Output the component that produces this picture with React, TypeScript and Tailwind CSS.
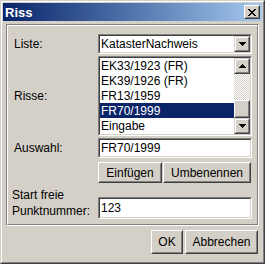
import React from "react";

function Sunken({ className = "", innerClass = "", children }: { className?: string; innerClass?: string; children?: React.ReactNode }) {
  return (
    <div className={"border border-t-[#808080] border-l-[#808080] border-b-white border-r-white " + className}>
      <div className={"w-full h-full border border-t-[#404040] border-l-[#404040] border-b-[#d4d0c8] border-r-[#d4d0c8] bg-white " + innerClass}>
        {children}
      </div>
    </div>
  );
}

function Raised({ className = "", children }: { className?: string; children?: React.ReactNode }) {
  return (
    <div className={"border border-t-white border-l-white border-b-[#404040] border-r-[#404040] bg-[#d4d0c8] " + className}>
      <div className="w-full h-full border border-t-[#d4d0c8] border-l-[#d4d0c8] border-b-[#808080] border-r-[#808080] flex items-center justify-center">
        {children}
      </div>
    </div>
  );
}

function ArrowBtn({ up = false, className = "" }: { up?: boolean; className?: string }) {
  return (
    <div className={"border border-t-[#d4d0c8] border-l-[#d4d0c8] border-b-[#404040] border-r-[#404040] bg-[#d4d0c8] " + className}>
      <div className="w-full h-full border border-t-white border-l-white border-b-[#808080] border-r-[#808080] flex items-center justify-center">
        <svg width="7" height="4" viewBox="0 0 7 4" shapeRendering="crispEdges">
          {up ? (
            <path d="M3 0h1v1H3zM2 1h3v1H2zM1 2h5v1H1zM0 3h7v1H0z" fill="#000" />
          ) : (
            <path d="M0 0h7v1H0zM1 1h5v1H1zM2 2h3v1H2zM3 3h1v1H3z" fill="#000" />
          )}
        </svg>
      </div>
    </div>
  );
}

function Button({ label, className = "" }: { label: string; className?: string }) {
  return (
    <Raised className={className}>
      <span>{label}</span>
    </Raised>
  );
}

const items = ["EK33/1923 (FR)", "EK39/1926 (FR)", "FR13/1959", "FR70/1999", "Eingabe"];

export default function App() {
  return (
    <div className="w-[265px] h-[264px] bg-[#d4d0c8] font-['Liberation_Sans',Arial,sans-serif] text-[12px] text-black leading-none">
      <div className="w-full h-full border border-t-[#d4d0c8] border-l-[#d4d0c8] border-r-[#404040] border-b-[#404040]">
        <div className="w-full h-full border border-t-white border-l-white border-r-[#808080] border-b-[#808080] p-px flex flex-col">
          {/* Title bar */}
          <div className="h-[18px] shrink-0 flex items-center justify-between bg-gradient-to-r from-[#0a246a] to-[#a6caf0] pl-[2px] pr-[2px]">
            <span className="text-white font-bold text-[13px]">Riss</span>
            <Raised className="w-[16px] h-[14px]">
              <svg width="8" height="7" viewBox="0 0 8 7" shapeRendering="crispEdges">
                <path d="M0 0h2v1H0zM6 0h2v1H6zM1 1h2v1H1zM5 1h2v1H5zM2 2h4v1H2zM3 3h2v1H3zM2 4h4v1H2zM1 5h2v1H1zM5 5h2v1H5zM0 6h2v1H0zM6 6h2v1H6z" fill="#000" />
              </svg>
            </Raised>
          </div>

          {/* Panel */}
          <div className="mt-[3px] mx-[3px] h-[202px] shrink-0 border border-t-[#808080] border-l-[#808080] border-b-white border-r-white">
            <div className="w-full h-full border border-t-white border-l-white border-b-[#808080] border-r-[#808080] pt-[8px] flex flex-col">
              {/* Liste */}
              <div className="flex items-center">
                <div className="w-[90px] pl-[6px]">Liste:</div>
                <Sunken className="w-[154px] h-[20px]" innerClass="flex items-center">
                  <span className="flex-1 pl-[1px]">KatasterNachweis</span>
                  <ArrowBtn className="w-[16px] h-[16px]" />
                </Sunken>
              </div>
              {/* Risse */}
              <div className="flex items-center mt-[2px]">
                <div className="w-[90px] pl-[6px]">Risse:</div>
                <Sunken className="w-[154px] h-[80px]" innerClass="flex">
                  <div className="flex-1 flex flex-col">
                    {items.map((it) => (
                      <div
                        key={it}
                        className={
                          "h-[15px] flex items-center pl-[1px] " +
                          (it === "FR70/1999" ? "bg-[#0a246a] text-white" : "")
                        }
                      >
                        {it}
                      </div>
                    ))}
                  </div>
                  <div className="w-[16px] flex flex-col">
                    <ArrowBtn up className="h-[16px]" />
                    <div className="flex-1 bg-[repeating-conic-gradient(#ffffff_0%_25%,#d4d0c8_0%_50%)] bg-size-[2px_2px]" />
                    <Raised className="h-[18px]" />
                    <ArrowBtn className="h-[16px]" />
                  </div>
                </Sunken>
              </div>
              {/* Auswahl */}
              <div className="flex items-center mt-[2px]">
                <div className="w-[90px] pl-[6px]">Auswahl:</div>
                <Sunken className="w-[154px] h-[20px]" innerClass="flex items-center">
                  <span className="pl-[1px]">FR70/1999</span>
                </Sunken>
              </div>
              {/* Buttons */}
              <div className="flex mt-[4px] pl-[90px] gap-[1px]">
                <Button label="Einfügen" className="w-[64px] h-[21px]" />
                <Button label="Umbenennen" className="w-[88px] h-[21px]" />
              </div>
              {/* Start freie Punktnummer */}
              <div className="flex items-end mt-[4px]">
                <div className="w-[90px] pl-[4px] leading-[16px]">
                  <div>Start freie</div>
                  <div>Punktnummer:</div>
                </div>
                <Sunken className="w-[154px] h-[22px]" innerClass="flex items-center">
                  <span className="pl-[1px]">123</span>
                </Sunken>
              </div>
            </div>
          </div>

          {/* Bottom buttons */}
          <div className="flex justify-end gap-[2px] mt-[4px] pr-[4px]">
            <Button label="OK" className="w-[32px] h-[24px]" />
            <Button label="Abbrechen" className="w-[73px] h-[24px]" />
          </div>
        </div>
      </div>
    </div>
  );
}
